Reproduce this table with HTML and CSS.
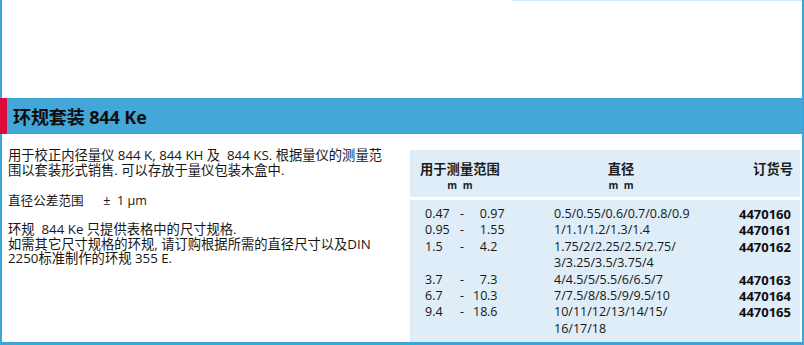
FILE: index.html
```html
<!DOCTYPE html>
<html lang="zh">
<head>
<meta charset="utf-8">
<title>环规套装 844 Ke</title>
<link rel="stylesheet" href="styles.css">
</head>
<body>
<div class="page">
  <div class="top"><div class="topline"></div></div>
  <div class="title"><h1>环规套装 844 Ke</h1></div>
  <div class="content">
    <div class="desc">
      <p class="p1">用于校正内径量仪 844 K, 844 KH 及&nbsp; 844 KS. 根据量仪的测量范<br>围以套装形式销售. 可以存放于量仪包装木盒中.</p>
      <p class="p2">直径公差范围&nbsp;&nbsp;&nbsp;&nbsp;&nbsp; ±&nbsp; 1 µm</p>
      <p class="p3">环规&nbsp; 844 Ke 只提供表格中的尺寸规格.<br>如需其它尺寸规格的环规, 请订购根据所需的直径尺寸以及DIN<br>2250标准制作的环规 355 E.</p>
    </div>
    <div class="panel">
      <div class="thead">
        <div class="th th1"><div>用于测量范围</div><div class="unit">m m</div></div>
        <div class="th th2"><div>直径</div><div class="unit">m m</div></div>
        <div class="th th3">订货号</div>
      </div>
      <div class="tbody">
        <div class="range"><span class="a">0.47</span><span class="d">-</span><span class="bi">0</span><span>.97</span></div>
        <div class="dia">0.5/0.55/0.6/0.7/0.8/0.9</div>
        <div class="no">4470160</div>

        <div class="range"><span class="a">0.95</span><span class="d">-</span><span class="bi">1</span><span>.55</span></div>
        <div class="dia">1/1.1/1.2/1.3/1.4</div>
        <div class="no">4470161</div>

        <div class="range"><span class="a">1.5</span><span class="d">-</span><span class="bi">4</span><span>.2</span></div>
        <div class="dia">1.75/2/2.25/2.5/2.75/<br>3/3.25/3.5/3.75/4</div>
        <div class="no">4470162</div>

        <div class="range"><span class="a">3.7</span><span class="d">-</span><span class="bi">7</span><span>.3</span></div>
        <div class="dia">4/4.5/5/5.5/6/6.5/7</div>
        <div class="no">4470163</div>

        <div class="range"><span class="a">6.7</span><span class="d">-</span><span class="bi">10</span><span>.3</span></div>
        <div class="dia">7/7.5/8/8.5/9/9.5/10</div>
        <div class="no">4470164</div>

        <div class="range"><span class="a">9.4</span><span class="d">-</span><span class="bi">18</span><span>.6</span></div>
        <div class="dia">10/11/12/13/14/15/<br>16/17/18</div>
        <div class="no">4470165</div>
      </div>
    </div>
  </div>
</div>
</body>
</html>
```
FILE: styles.css
```css
html, body {
  margin: 0;
  background: #ffffff;
}
body {
  width: 804px;
  height: 345px;
  overflow: hidden;
  font-family: "Open Sans", "Noto Sans CJK SC", sans-serif;
  color: #161616;
}
.page {
  height: 345px;
  box-sizing: border-box;
  border-bottom: 3px solid #3ba6dc;
  display: flex;
  flex-direction: column;
}
.top {
  height: 98px;
  flex: none;
  box-sizing: border-box;
  border-left: 2px solid #3ba6dc;
  border-right: 2px solid #3ba6dc;
  display: flex;
  justify-content: flex-end;
}
.topline {
  width: 290px;
  height: 1px;
  background: #d3e7f5;
}
.title {
  height: 36px;
  flex: none;
  box-sizing: border-box;
  background: #43a8d8;
  border-left: 7px solid #dc0b3b;
  border-right: 2px solid #3ba6dc;
  padding-left: 6px;
  display: flex;
  align-items: center;
}
.title h1 {
  margin: 0;
  font-size: 18px;
  font-weight: 700;
  color: #0e0e0e;
  letter-spacing: -0.1px;
}
.content {
  flex: 1;
  display: flex;
  border-left: 2px solid #3ba6dc;
  border-right: 2px solid #3ba6dc;
}
.desc {
  width: 408px;
  flex: none;
  box-sizing: border-box;
  padding: 14px 0 0 6px;
  font-size: 13.3px;
  line-height: 15px;
}
.desc p {
  margin: 0;
}
.desc .p2 {
  margin-top: 15px;
  font-size: 12.6px;
}
.desc .p3 {
  margin-top: 14px;
  line-height: 14.6px;
}
.panel {
  margin-top: 16px;
  width: 390px;
  flex: none;
  display: flex;
  flex-direction: column;
}
.thead {
  height: 47px;
  flex: none;
  background: #deedf8;
  display: grid;
  grid-template-columns: 144px 134px 1fr;
  box-sizing: border-box;
  padding: 11px 7px 0 0;
  font-size: 13.3px;
  font-weight: 700;
  line-height: 16px;
  color: #1c1c1c;
}
.th1 {
  justify-self: start;
  margin-left: 10px;
  display: flex;
  flex-direction: column;
  align-items: center;
}
.th2 {
  display: flex;
  flex-direction: column;
  align-items: center;
}
.th3 {
  justify-self: end;
}
.unit {
  font-size: 10px;
  word-spacing: 3px;
}
.tbody {
  flex: 1;
  margin-top: 3px;
  background: #deedf8;
  box-sizing: border-box;
  padding: 6px 9px 0 0;
  display: grid;
  grid-template-columns: 144px 1fr auto;
  align-content: start;
  font-size: 12.5px;
  line-height: 16.4px;
}
.range {
  display: flex;
  padding-left: 15px;
}
.range .a {
  width: 35px;
}
.range .d {
  width: 13px;
}
.range .bi {
  width: 14px;
  text-align: right;
}
.no {
  font-weight: 700;
  font-size: 13px;
  color: #0e0e0e;
  text-align: right;
}
```
